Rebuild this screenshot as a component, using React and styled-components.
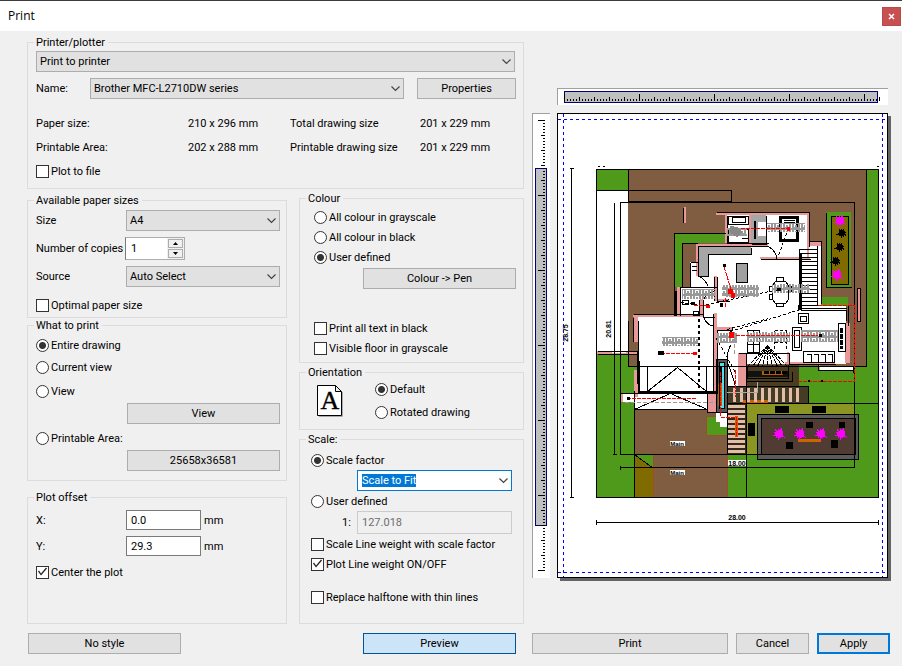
import { useEffect, useRef } from "react";
import styled, { createGlobalStyle, css } from "styled-components";

const GlobalStyle = createGlobalStyle`
  * {
    box-sizing: border-box;
  }

  body {
    margin: 0;
    background: #f0f0f0;
  }

  body,
  button,
  input,
  select {
    color: #000;
    font-family: Roboto, "DejaVu Sans Condensed", sans-serif;
    font-size: 11px;
    line-height: 13px;
  }
`;

const Dialog = styled.form`
  min-height: 100vh;
  background: #f0f0f0;
`;

const TitleBar = styled.header`
  display: flex;
  align-items: center;
  justify-content: space-between;
  height: 31px;
  padding: 0 1px 0 8px;
  border-top: 1px solid #3c3c3c;
  background: #fff;
`;

const Title = styled.h1`
  margin: 0;
  font-family: "Open Sans", sans-serif;
  font-size: 12px;
  font-weight: normal;
  line-height: 16px;
`;

const CloseButton = styled.button`
  display: grid;
  place-items: center;
  width: 19px;
  height: 19px;
  padding: 0;
  border: 1px solid #b84a4a;
  background: #c75050;
`;

const Main = styled.main`
  display: grid;
  grid-template-columns: minmax(0, 497fr) minmax(0, 359fr);
  column-gap: 8px;
  padding: 5px 11px 12px 27px;
`;

const Settings = styled.div`
  display: grid;
  grid-template-columns: minmax(0, 260fr) minmax(0, 225fr);
  gap: 3px 12px;
`;

const Stack = styled.div`
  display: flex;
  flex-direction: column;
  gap: ${({ $gap }) => $gap || 0}px;
`;

const LeftColumn = styled(Stack)`
  padding-top: 2px;
`;

const Group = styled.fieldset`
  min-width: 0;
  margin: 0;
  padding: 0 6px;
  border: 1px solid #dcdcdc;
  ${({ $wide }) => $wide && "grid-column: 1 / -1;"}
  ${({ $grow }) => $grow && "flex: 1;"}
`;

const Legend = styled.legend`
  height: 13px;
  padding: 0 3px 0 2px;
`;

const Row = styled.div`
  display: grid;
  grid-template-columns: ${({ $columns }) => $columns};
  align-items: center;
`;

const PrinterBody = styled.div`
  padding: 2px 1px 5px 2px;
`;

const PrinterSelectRow = styled.div`
  padding-right: 1px;
`;

const PrinterNameRow = styled(Row)`
  margin-top: 6px;
`;

const Details = styled.dl`
  display: grid;
  grid-template-columns: 152fr 102fr 130fr 96fr;
  grid-auto-rows: 24px;
  align-items: center;
  margin: 12px 0 0;
`;

const Term = styled.dt`
  white-space: nowrap;
`;

const Value = styled.dd`
  margin: 0;
  white-space: nowrap;
`;

const PaperBody = styled(Stack)`
  padding: 3px 0 0 2px;
`;

const AreaBody = styled(Stack)`
  padding: 3px 0 9px 2px;
`;

const OffsetBody = styled(Stack)`
  padding: 6px 0 0 2px;
`;

const ColourBody = styled(Stack)`
  padding: 2px 0 4px 8px;
`;

const OrientationBody = styled(Row)`
  padding: 0 0 7px 11px;
`;

const ScaleBody = styled(Stack)`
  padding: 4px 5px 16px 5px;
`;

const Indent = styled.div`
  display: flex;
  align-items: center;
  padding: 0 ${({ $right }) => $right || 0}px 0 ${({ $left }) => $left}px;
`;

const RatioRow = styled.label`
  display: grid;
  grid-template-columns: 15px minmax(0, 1fr);
  align-items: center;
  padding-left: 31px;
`;

const Choice = styled.label`
  display: flex;
  align-items: center;
  gap: 2px;
  height: ${({ $tall }) => ($tall ? 24 : 20)}px;
  white-space: nowrap;
`;

const tickStyle = css`
  appearance: none;
  flex: none;
  width: 13px;
  height: 13px;
  margin: 0;
  border: 1px solid #333;
  background: #fff;
`;

const CheckInput = styled.input`
  ${tickStyle}

  &:checked::before {
    content: "";
    display: block;
    width: 11px;
    height: 11px;
    background: #222;
    clip-path: polygon(1px 5px, 2px 4px, 4px 7px, 9px 1px, 10px 2px, 4px 9px);
  }
`;

const RadioInput = styled.input`
  ${tickStyle}
  border-radius: 50%;

  &:checked {
    background: radial-gradient(circle, #333 3px, #fff 4px);
  }
`;

const Button = styled.button`
  width: 100%;
  height: 21px;
  padding: 0;
  border: 1px solid #adadad;
  background: #e1e1e1;
  ${({ $hot }) =>
    $hot &&
    css`
      border-color: #005499;
      background: #cce4f7;
    `}
  ${({ $default }) => $default && "border: 2px solid #0078d7;"}
`;

const SelectBox = styled.div`
  position: relative;
  width: 100%;

  svg {
    position: absolute;
    top: 8px;
    right: 4px;
    pointer-events: none;
  }
`;

const SelectInput = styled.select`
  appearance: none;
  display: block;
  width: 100%;
  height: 21px;
  padding: 0 18px 0 3px;
  border: 1px solid #adadad;
  border-radius: 0;
  background: #e1e1e1;
`;

const TextInput = styled.input`
  width: 100%;
  height: ${({ $tall }) => ($tall ? 23 : 20)}px;
  padding: 0 4px;
  border: 1px solid #7a7a7a;
  border-radius: 0;
  outline: none;
  background: #fff;

  &:disabled {
    border: 1px solid #ccc;
    background: #f0f0f0;
    color: #6d6d6d;
  }
`;

const ComboInput = styled(TextInput)`
  display: block;
  height: 21px;
  border-color: #0078d7;

  &::selection {
    background: #0078d7;
    color: #fff;
  }
`;

const Spinner = styled.div`
  display: flex;
  width: 60px;
  height: 23px;
  border: 1px solid #adadad;
  border-left-color: #7a7a7a;
  background: #fff;
`;

const SpinnerInput = styled.input`
  flex: 1;
  width: 0;
  padding: 0 5px;
  border: 0;
  outline: none;
  background: transparent;
`;

const SpinnerButtons = styled.div`
  display: grid;
  gap: 1px;
  width: 17px;
  padding: 1px;
  background: #f0f0f0;
`;

const SpinnerButton = styled.button`
  display: grid;
  place-items: center;
  padding: 0;
  border: 1px solid #adadad;
  background: #f0f0f0;
`;

const Unit = styled.span`
  padding-left: 3px;
`;

const Preview = styled.section`
  display: grid;
  grid-template-columns: 18px minmax(0, 1fr);
  grid-template-rows: 17px auto;
  gap: 8px 7px;
  align-content: start;
  padding: 52px 3px 0 0;
`;

const Ruler = styled.svg`
  display: block;
  width: 100%;
  height: 100%;
  border: solid #a0a0a0;
  border-width: 1px 0 0 1px;
  background: #fff;
  ${({ $top }) => $top && "grid-column: 2;"}
`;

const Paper = styled.svg`
  display: block;
  width: 100%;
  background: #fff;
  box-shadow: 3px 3px 0 #646464;
`;

const Footer = styled.footer`
  grid-column: 1 / -1;
  display: grid;
  grid-template-columns: subgrid;
  padding-top: 9px;
`;

const FooterLeft = styled.div`
  display: grid;
  grid-template-columns: 153fr 182fr 153fr;
  padding: 0 8px 0 1px;

  button:last-child {
    grid-column: 3;
  }
`;

const FooterRight = styled.div`
  display: grid;
  grid-template-columns: 1fr 73px 73px;
  gap: 8px;
  padding-right: 1px;
`;

const Chevron = () => (
  <svg width="9" height="6" viewBox="0 0 9 6" aria-hidden="true">
    <path d="M.5.5 4.500 4.500 8.500.5" fill="none" stroke="#444" strokeWidth="1.2" />
  </svg>
);

const Select = ({ label, id, options }) => (
  <SelectBox>
    <SelectInput id={id} aria-label={label}>
      {options.map((option) => (
        <option key={option}>{option}</option>
      ))}
    </SelectInput>
    <Chevron />
  </SelectBox>
);

const Check = ({ children, checked, tall }) => (
  <Choice $tall={tall}>
    <CheckInput type="checkbox" defaultChecked={checked} />
    {children}
  </Choice>
);

const Radio = ({ children, name, checked }) => (
  <Choice>
    <RadioInput type="radio" name={name} defaultChecked={checked} />
    {children}
  </Choice>
);

const ScaleCombo = () => {
  const input = useRef(null);

  useEffect(() => {
    input.current.focus();
    input.current.select();
  }, []);

  return (
    <SelectBox>
      <ComboInput
        ref={input}
        role="combobox"
        aria-label="Scale factor"
        aria-expanded="false"
        defaultValue="Scale to Fit"
      />
      <Chevron />
    </SelectBox>
  );
};

const range = (from, to, step) => {
  const out = [];
  for (let n = from; n <= to; n += step) out.push(n);
  return out;
};

const TopRuler = () => (
  <Ruler $top viewBox="558 89 330 16" preserveAspectRatio="none" shapeRendering="crispEdges" aria-hidden="true">
    <rect x="564.5" y="91.5" width="313" height="11" fill="#c0c0c0" stroke="#000080" />
    {range(564, 879, 3).map((x) => {
      const height = (x - 564) % 75 === 0 ? 7 : (x - 564) % 15 === 0 ? 4 : 2;
      return <rect key={x} x={x} y={101 - height} width="1" height={height} />;
    })}
  </Ruler>
);

const SideRuler = () => (
  <Ruler viewBox="533 114 17 464" preserveAspectRatio="none" shapeRendering="crispEdges" aria-hidden="true">
    <rect x="535.5" y="168.5" width="11" height="357" fill="#c0c0c0" stroke="#000080" />
    {range(120, 570, 3).map((y) => {
      const width = (y - 120) % 75 === 0 ? 7 : (y - 120) % 15 === 0 ? 4 : 2;
      return <rect key={y} x={545 - width} y={y} width={width} height="1" />;
    })}
  </Ruler>
);

// [x, y, width, height, colour]
const ground = [
  [597, 170, 31, 20, "#4f9a1a"],
  [628, 170, 238, 197, "#805d41"],
  [866, 170, 12, 327, "#4f9a1a"],
  [597, 354, 31, 143, "#4f9a1a"],
  [628, 367, 238, 130, "#4f9a1a"],
  [674, 233, 51, 10, "#4f9a1a"],
  [674, 233, 8, 54, "#4f9a1a"],
  [634, 409, 93, 45, "#805d41"],
  [634, 454, 20, 43, "#7f6b00"],
  [654, 454, 73, 43, "#805d41"],
  [706, 416, 21, 19, "#4f9a1a"],
  [826, 212, 25, 76, "#4f9a1a"],
  [831, 216, 17, 68, "#7f6b00"],
  [821, 297, 27, 9, "#4f9a1a"],
];

const rooms = [
  [597, 351, 41, 3, "#e89898"],
  [612, 352, 14, 1, "#fff"],
  [638, 317, 79, 76, "#fff"],
  [634, 393, 74, 16, "#fff"],
  [623, 394, 12, 8, "#fff"],
  [677, 287, 39, 29, "#fff"],
  [690, 262, 26, 26, "#fff"],
  [698, 246, 114, 110, "#fff"],
  [704, 298, 20, 62, "#fff"],
  [716, 330, 24, 60, "#fff"],
  [727, 214, 82, 33, "#fff"],
  [740, 306, 106, 58, "#fff"],
  [800, 243, 21, 64, "#fff"],
  [820, 366, 34, 5, "#fff"],
  [716, 412, 11, 10, "#fff"],
  [720, 420, 7, 7, "#fff"],
  [699, 247, 9, 29, "#a6a6a6"],
  [708, 247, 43, 7, "#a6a6a6"],
  [736, 263, 11, 19, "#a0a0a0"],
  [751, 215, 15, 29, "#a6a6a6"],
  [758, 222, 11, 14, "#fff"],
];

const walls = [
  [716, 213, 93, 2],
  [725, 213, 2, 30],
  [749, 214, 2, 30],
  [807, 213, 2, 45],
  [697, 244, 71, 2],
  [696, 244, 3, 32],
  [760, 257, 50, 2],
  [809, 242, 12, 4],
  [714, 276, 3, 25],
  [677, 287, 3, 28],
  [633, 315, 70, 2],
  [634, 315, 4, 27],
  [634, 370, 4, 27],
  [714, 313, 3, 79],
  [714, 327, 18, 3],
  [700, 299, 3, 17],
  [714, 299, 15, 2],
  [738, 353, 8, 33],
  [707, 393, 9, 19],
  [620, 393, 3, 9],
  [845, 323, 5, 40],
  [785, 362, 50, 2],
  [787, 352, 2, 12],
  [818, 364, 2, 6],
  [857, 288, 3, 33],
  [684, 207, 2, 16],
];

const terrace = [
  [746, 365, 53, 22, "#4a3d22"],
  [727, 386, 81, 17, "#453c25"],
  [747, 403, 108, 51, "#8a9524"],
  [757, 414, 101, 45, "#5b5b5b"],
  [761, 418, 94, 36, "#503c32"],
  [727, 403, 19, 52, "#33291a"],
  [746, 371, 42, 6, "#111"],
  [762, 371, 21, 4, "#b85a08"],
  [743, 400, 25, 3, "#d06200"],
  [798, 439, 23, 3, "#d06200"],
  [716, 359, 11, 53, "#555"],
  [720, 363, 4, 45, "#50e0e8"],
  [718, 383, 4, 23, "#c85c00"],
  [719, 366, 3, 17, "#000"],
];

const lines = [
  "M596 169H878V497H596ZM596 190H731V201H628M628 169V201M620 454V202H854V467",
  "M614 202V454M612 454H616M571 168V497M569 168H573M569 497H573M596 522H878M596 519V524M878 519V524",
  "M628 366H866M866 169V366M620 454H855M620 467H854M620 465V469M634 390V497M746 386V497M799 403H878M634 409H707",
  "M826 212V287H851M831 216H848V284H831ZM674 287V233H725M682 287V243H697M628 320V366H638",
  "M716 212H809V246M727 215V243H768M698 276V246H768M690 262H697M690 262V287H716M760 259H810",
  "M728 216H748V224H728ZM728 229H748V242H728ZM732 217H745V222H732ZM741 238H748M766 215V244H751",
  "M699 276H708V254H751V247M736 263H747V282H736ZM680 315V287H715M674 287V315M633 317V341M638 320V392M699 315V299",
  "M633 314H703M714 276V300M717 276V301H729M703 317H714M703 299V316M713 313V393M717 330V393M716 330H732V326",
  "M647 366V391M706 366V391M647 391 677 367 706 391M634 409 670 393 707 409M634 393H716M707 393V412H716V393",
  "M620 393H635M620 402V393M634 454 653 468M738 353H746V386H738M746 353H789V364H835M747 366V378H788V364M792 371V381H746",
  "M799 248V305H820M817 245V305M799 308H846M821 245V303M800 310H846V320M809 241H821V245",
  "M772 285V299L775 303H785L788 299V285L785 281H775ZM776 281V277H783V281M776 303V306H783V303M772 286H769V291H772M788 286H791V291H788M772 294H769V299H772",
  "M798 313H808V323H798ZM800 316H806V321H800ZM792 327H801V350H792ZM794 330H799V347H794ZM803 351H834V362H803ZM806 354H811V362M813 354H818V362M820 354H825V362M827 354H832V362",
  "M838 323H845V351H838ZM747 330H759V352H747ZM753 330V352M747 337H759M747 344H759",
  "M757 414H858V459H757ZM761 418H855V454H761ZM818 364V370H853V366M853 366V372",
  "M716 359H727V412H716ZM719 362H724V408H719ZM727 386H808V403H727ZM727 403V454",
  "M857 288H860V321H857ZM683 207V222M848 305V325M597 351H637M597 354H637M637 383V350",
  "M708 286Q704 278 699 276M703 299Q706 292 714 291M703 316Q706 325 714 326M768 246Q776 251 776 258M730 345Q726 352 727 358M735 386Q730 368 727 363",
  "M691 266H696M691 270H696M682 300H688V304H682ZM693 311H698V315H693ZM597 166H599M602 166H604M876 166H878",
];

const Plant = ({ x, y, r, fill = "#f0f" }) => {
  const points = range(0, 21, 1).map((n) => {
    const angle = (n * Math.PI) / 11;
    const reach = n % 2 ? r * 0.6 : r * (n % 4 ? 1.2 : 0.9);
    return `${(x + Math.cos(angle) * reach).toFixed(1)},${(y + Math.sin(angle) * reach).toFixed(1)}`;
  });
  return <polygon points={points.join(" ")} fill={fill} />;
};

const Blocks = ({ items, fill }) =>
  items.map(([x, y, width, height, colour], index) => (
    <rect key={index} x={x} y={y} width={width} height={height} fill={colour || fill} />
  ));

const PaperPreview = () => (
  <Paper viewBox="557 113 331 465" shapeRendering="crispEdges" role="img" aria-label="Drawing preview">
    <defs>
      <pattern id="tags" width="9" height="6" patternUnits="userSpaceOnUse">
        <path d="M0 0H9V2H0ZM0 2H2V6H0ZM3 3H5V6H3ZM6 2H8V5H6ZM2 5H8V6H2Z" fill="#999" />
      </pattern>
    </defs>
    <Blocks items={ground} />
    <path d="M634 454h20v14z" fill="#4f9a1a" />
    <path d="M706.500 435.500V416.500H727.500M706.500 435.500H727.500V497M653.500 497V454.500M654 497H727" fill="none" stroke="#a04a30" />
    <Blocks items={rooms} />
    <Blocks items={walls} fill="#e89898" />
    <Blocks items={terrace} />
    {range(733, 798, 7).map((x) => (
      <rect key={x} x={x} y="388" width="3" height="14" fill="#e2bda8" />
    ))}
    {range(405, 451, 5).map((y) => (
      <rect key={y} x="728" y={y} width="17" height="3" fill="#e2bda8" />
    ))}
    <rect x="735" y="416" width="3" height="21" fill="#d06200" />
    <g transform="translate(.5 .5)" fill="none" stroke="#000">
      {lines.map((d) => (
        <path key={d} d={d} />
      ))}
      {range(249, 303, 4).map((y) => (
        <path key={y} d={`M799 ${y}H817`} />
      ))}
      {range(747, 787, 5).map((x) => (
        <path key={x} d={`M767 345 ${x} 366`} strokeDasharray="4 1" />
      ))}
      <path d="M800 253V305M638 360V391H716M754 220V238M675 290V315" strokeWidth="2" />
      <path d="M780 217H797V240H780Z" strokeWidth="3" />
      <path d="M783 220H794M783 222H794" />
      <path
        d="M706 304 779 289M730 331 800 309M788 228 778 255M680 302 700 305M727 329 768 318M716 338 735 372M774 330V350M786 330V350M774 330H786M774 342H786"
        strokeDasharray="3 2"
      />
      <path d="M698 318V390" strokeWidth="2" strokeDasharray="3 3" />
      <path d="M841 327V348M763 372H786" strokeWidth="3" strokeDasharray="5 1" />
    </g>
    <Blocks
      fill="url(#tags)"
      items={[
        [767, 223, 38, 9],
        [727, 228, 20, 8],
        [722, 285, 37, 12],
        [772, 284, 38, 9],
        [682, 289, 33, 10],
        [662, 337, 36, 9],
        [747, 332, 43, 10],
        [717, 333, 20, 10],
        [801, 330, 37, 12],
      ]}
    />
    <path d="M730 226l8 1 4 5-5 5-7-4z" fill="#888" />
    <g fill="none" stroke="#f00" strokeDasharray="4 1">
      <path d="M741 228.500H790M818 305.500H854.500V381.500H797M661 353.500H696M627 398.500H697" />
      <path d="M724 267 732 292M694 305.500H708M725.500 298V308M731 335.500H818M735.500 370V397M720.500 372V417H736V437" />
    </g>
    <path d="M625 402.500H716M734.500 332V354" fill="none" stroke="#999" strokeDasharray="4 2" />
    <path d="M727 392.500H757V382" fill="none" stroke="#aaa" />
    <Blocks
      fill="#f00"
      items={[
        [728, 289, 5, 5],
        [731, 293, 4, 5],
        [706, 305, 4, 3],
        [693, 352, 4, 3],
        [729, 332, 5, 6],
        [787, 227, 3, 4],
      ]}
    />
    <Blocks
      fill="#000"
      items={[
        [723, 264, 3, 3],
        [691, 302, 4, 3],
        [720, 303, 3, 4],
        [658, 351, 6, 4],
        [777, 288, 4, 3],
        [819, 334, 3, 3],
        [627, 397, 3, 3],
        [808, 380, 2, 2],
        [821, 380, 2, 2],
        [775, 406, 14, 7],
        [812, 406, 14, 7],
        [748, 423, 7, 13],
        [806, 422, 7, 6],
        [839, 422, 6, 6],
        [786, 442, 7, 7],
        [831, 440, 7, 8],
        [798, 305, 4, 5],
      ]}
    />
    <Plant x={840} y={221} r={6} />
    <Plant x={837} y={275} r={6} />
    <Plant x={842} y={233} r={5} fill="#000" />
    <Plant x={840} y={247} r={5} fill="#000" />
    <Plant x={836} y={261} r={5} fill="#000" />
    {[779, 800, 821, 841].map((x) => (
      <Plant key={x} x={x} y={434} r={6} />
    ))}
    <path d="M670 441h15v5h-15zM670 470h15v5h-15zM728 460h18v6h-18z" fill="#fff" />
    <g fontFamily="Liberation Sans, sans-serif" fontSize="7" fontWeight="bold" textAnchor="middle">
      <text x="677" y="446" fontSize="6">Main</text>
      <text x="677" y="475" fontSize="6">Main</text>
      <text x="737" y="466">18.00</text>
      <text x="737" y="520">28.00</text>
      <text transform="translate(568 333) rotate(-90)">28.75</text>
      <text transform="translate(611 329) rotate(-90)">20.81</text>
    </g>
    <path d="M558 119.500H888M558 572.500H888M563.500 114V578M882.500 114V578" fill="none" stroke="#00f" strokeDasharray="3 3" />
    <rect x="557.500" y="113.500" width="330" height="464" fill="none" stroke="#000" />
  </Paper>
);

const OrientationIcon = () => (
  <svg width="26" height="32" viewBox="0 0 26 32" role="img" aria-label="Portrait">
    <path d="M2 31.500H25.500V7" fill="none" stroke="#aaa" />
    <path d="M.5.5H18.500L24.500 6.500V30.500H.5ZM18.500.5V6.500H24.500" fill="#fff" stroke="#000" />
    <text x="13" y="24" fontFamily="Liberation Serif, serif" fontSize="26" stroke="#000" strokeWidth=".4" textAnchor="middle">
      A
    </text>
  </svg>
);

const App = () => {
  return (
    <>
      <GlobalStyle />
      <Dialog onSubmit={(event) => event.preventDefault()}>
        <TitleBar>
          <Title>Print</Title>
          <CloseButton type="button" aria-label="Close">
            <svg width="7" height="7" viewBox="0 0 7 7" aria-hidden="true">
              <path d="M1 1 6 6M6 1 1 6" stroke="#fff" strokeWidth="1.5" />
            </svg>
          </CloseButton>
        </TitleBar>
        <Main>
          <Settings>
            <Group $wide>
              <Legend>Printer/plotter</Legend>
              <PrinterBody>
                <PrinterSelectRow>
                  <Select label="Printer/plotter" options={["Print to printer"]} />
                </PrinterSelectRow>
                <PrinterNameRow $columns="54px minmax(0, 1fr) 13px 99px">
                  <label htmlFor="printer">Name:</label>
                  <Select id="printer" options={["Brother MFC-L2710DW series"]} />
                  <span />
                  <Button type="button">Properties</Button>
                </PrinterNameRow>
                <Details>
                  <Term>Paper size:</Term>
                  <Value>210 x 296 mm</Value>
                  <Term>Total drawing size</Term>
                  <Value>201 x 229 mm</Value>
                  <Term>Printable Area:</Term>
                  <Value>202 x 288 mm</Value>
                  <Term>Printable drawing size</Term>
                  <Value>201 x 229 mm</Value>
                </Details>
                <Check tall>Plot to file</Check>
              </PrinterBody>
            </Group>
            <LeftColumn $gap={10}>
              <Stack $gap={1}>
                <Group>
                  <Legend>Available paper sizes</Legend>
                  <PaperBody $gap={6}>
                    <Row $columns="90px minmax(0, 1fr)">
                      <label htmlFor="size">Size</label>
                      <Select id="size" options={["A4"]} />
                    </Row>
                    <Row $columns="89px minmax(0, 1fr)">
                      <label htmlFor="copies">Number of copies</label>
                      <Spinner>
                        <SpinnerInput id="copies" defaultValue="1" />
                        <SpinnerButtons>
                          <SpinnerButton type="button" aria-label="More copies">
                            <svg width="5" height="3" viewBox="0 0 5 3">
                              <path d="M0 3H5L2.500 0Z" />
                            </svg>
                          </SpinnerButton>
                          <SpinnerButton type="button" aria-label="Fewer copies">
                            <svg width="5" height="3" viewBox="0 0 5 3">
                              <path d="M0 0H5L2.500 3Z" />
                            </svg>
                          </SpinnerButton>
                        </SpinnerButtons>
                      </Spinner>
                    </Row>
                    <Row $columns="90px minmax(0, 1fr)">
                      <label htmlFor="source">Source</label>
                      <Select id="source" options={["Auto Select"]} />
                    </Row>
                    <Check tall>Optimal paper size</Check>
                  </PaperBody>
                </Group>
                <Group>
                  <Legend>What to print</Legend>
                  <AreaBody $gap={4}>
                    <Stack $gap={2}>
                      <Radio name="area" checked>Entire drawing</Radio>
                      <Radio name="area">Current view</Radio>
                    </Stack>
                    <Stack $gap={2}>
                      <Radio name="area">View</Radio>
                      <Indent $left={91}>
                        <Button type="button">View</Button>
                      </Indent>
                    </Stack>
                    <Stack $gap={2}>
                      <Radio name="area">Printable Area:</Radio>
                      <Indent $left={91}>
                        <Button type="button">25658x36581</Button>
                      </Indent>
                    </Stack>
                  </AreaBody>
                </Group>
              </Stack>
              <Group $grow>
                <Legend>Plot offset</Legend>
                <OffsetBody $gap={6}>
                  <Row $columns="90px 75px 1fr">
                    <label htmlFor="offset-x">X:</label>
                    <TextInput id="offset-x" defaultValue="0.0" />
                    <Unit>mm</Unit>
                  </Row>
                  <Row $columns="90px 75px 1fr">
                    <label htmlFor="offset-y">Y:</label>
                    <TextInput id="offset-y" defaultValue="29.3" />
                    <Unit>mm</Unit>
                  </Row>
                  <Check checked>Center the plot</Check>
                </OffsetBody>
              </Group>
            </LeftColumn>
            <Stack $gap={3}>
              <Group>
                <Legend>Colour</Legend>
                <ColourBody $gap={29}>
                  <Stack $gap={1}>
                    <Stack>
                      <Radio name="colour">All colour in grayscale</Radio>
                      <Radio name="colour">All colour in black</Radio>
                      <Radio name="colour" checked>User defined</Radio>
                    </Stack>
                    <Indent $left={49} $right={1}>
                      <Button type="button">{"Colour -> Pen"}</Button>
                    </Indent>
                  </Stack>
                  <Stack>
                    <Check>Print all text in black</Check>
                    <Check>Visible floor in grayscale</Check>
                  </Stack>
                </ColourBody>
              </Group>
              <Group>
                <Legend>Orientation</Legend>
                <OrientationBody $columns="58px 1fr">
                  <OrientationIcon />
                  <Stack $gap={3}>
                    <Radio name="orientation" checked>Default</Radio>
                    <Radio name="orientation">Rotated drawing</Radio>
                  </Stack>
                </OrientationBody>
              </Group>
              <Group $grow>
                <Legend>Scale:</Legend>
                <ScaleBody $gap={13}>
                  <Stack>
                    <Radio name="scale" checked>Scale factor</Radio>
                    <Indent $left={46}>
                      <ScaleCombo />
                    </Indent>
                    <Radio name="scale">User defined</Radio>
                    <RatioRow>
                      1:
                      <TextInput $tall disabled defaultValue="127.018" />
                    </RatioRow>
                    <Check>Scale Line weight with scale factor</Check>
                    <Check checked>Plot Line weight ON/OFF</Check>
                  </Stack>
                  <Check>Replace halftone with thin lines</Check>
                </ScaleBody>
              </Group>
            </Stack>
          </Settings>
          <Preview aria-label="Preview">
            <TopRuler />
            <SideRuler />
            <PaperPreview />
          </Preview>
          <Footer>
            <FooterLeft>
              <Button type="button">No style</Button>
              <Button type="button" $hot>Preview</Button>
            </FooterLeft>
            <FooterRight>
              <Button type="submit">Print</Button>
              <Button type="button">Cancel</Button>
              <Button type="button" $default>Apply</Button>
            </FooterRight>
          </Footer>
        </Main>
      </Dialog>
    </>
  );
};

export default App;
